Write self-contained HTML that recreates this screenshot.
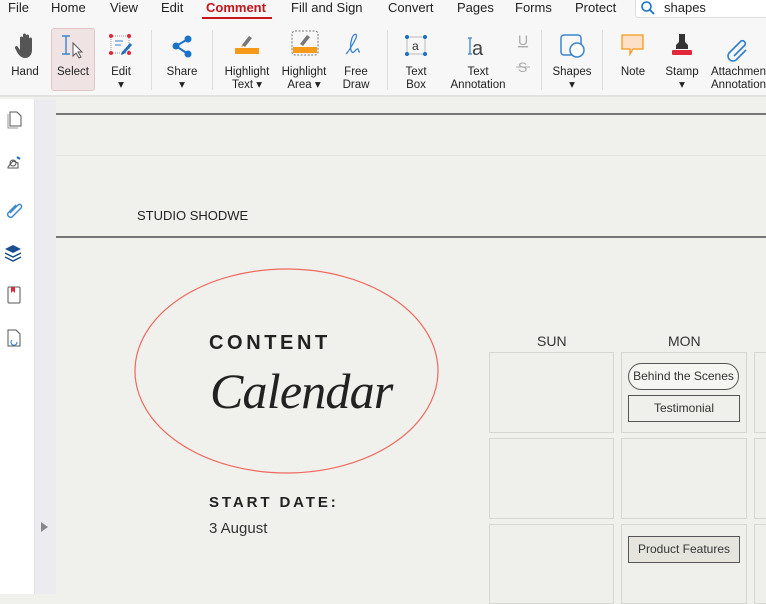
<!DOCTYPE html>
<html><head><meta charset="utf-8"><style>
*{margin:0;padding:0;box-sizing:border-box}
body{width:766px;height:594px;overflow:hidden;background:#f0f0ed;font-family:"Liberation Sans",sans-serif;position:relative}
.a{position:absolute}
.menu{font-size:13px;color:#222;top:0}
.tb{font-size:11.5px;color:#222;text-align:center;line-height:13px}
.cell{position:absolute;border:1.5px solid #d6d6d2;background:#efefeb}
</style></head><body>
<div class="a" style="left:0;top:0;width:766px;height:97px;background:#f7f7f7;border-bottom:2px solid #e2e2e2"></div>
<div class="a menu" style="left:8px">File</div>
<div class="a menu" style="left:51px">Home</div>
<div class="a menu" style="left:110px">View</div>
<div class="a menu" style="left:161px">Edit</div>
<div class="a menu" style="left:206px;color:#c4161c;font-weight:bold">Comment</div>
<div class="a" style="left:202px;top:17px;width:70px;height:2px;background:#c4161c"></div>
<div class="a menu" style="left:291px">Fill and Sign</div>
<div class="a menu" style="left:388px">Convert</div>
<div class="a menu" style="left:457px">Pages</div>
<div class="a menu" style="left:515px">Forms</div>
<div class="a menu" style="left:575px">Protect</div>
<div class="a" style="left:635px;top:-2px;width:140px;height:20px;background:#fff;border:1px solid #ddd;border-radius:3px"></div>
<svg class="a" style="left:640px;top:0" width="16" height="16"><circle cx="6.5" cy="6.5" r="4.5" fill="none" stroke="#1a73c9" stroke-width="1.6"/><path d="M10 10l4 4" stroke="#1a73c9" stroke-width="1.8"/></svg>
<div class="a menu" style="left:664px">shapes</div>
<div class="a" style="left:51px;top:28px;width:44px;height:63px;background:#f0e3e3;border:1px solid #e3c5c5;border-radius:3px"></div>
<div class="a" style="left:151px;top:30px;width:1px;height:60px;background:#ddd"></div>
<div class="a" style="left:212px;top:30px;width:1px;height:60px;background:#ddd"></div>
<div class="a" style="left:387px;top:30px;width:1px;height:60px;background:#ddd"></div>
<div class="a" style="left:541px;top:30px;width:1px;height:60px;background:#ddd"></div>
<div class="a" style="left:602px;top:30px;width:1px;height:60px;background:#ddd"></div>
<svg class="a" style="left:0;top:30px" width="766" height="50">
<path d="M20 20V8a1.5 1.5 0 013 0v7V5a1.5 1.5 0 013 0v10V6a1.5 1.5 0 013 0v10V9a1.5 1.5 0 013 0v11c0 5-3 8-7 8s-6-3-8-6l-2-4a1.5 1.5 0 012.5-1.5z" fill="#555"/>
<path d="M62 6h8M66 6v18M62 24h8" stroke="#3a85d0" stroke-width="1.4" fill="none"/><path d="M73 13v13l3-3 3 5 2-1-3-5h4z" fill="#fff" stroke="#555"/>
<rect x="111" y="6" width="18" height="17" fill="none" stroke="#999" stroke-dasharray="1 1"/><g fill="#e0283a"><circle cx="111" cy="6" r="2"/><circle cx="129" cy="6" r="2"/><circle cx="111" cy="23" r="2"/><circle cx="129" cy="23" r="2"/></g><path d="M115 11h8M115 15h6" stroke="#3a85d0"/><path d="M122 22l8-9 2 2-8 9-3 1z" fill="#1a6fc4"/>
<g fill="#1a73c9"><circle cx="188" cy="9" r="3.5"/><circle cx="176" cy="16" r="3.5"/><circle cx="188" cy="24" r="3.5"/></g><path d="M188 9l-12 7 12 8" stroke="#1a73c9" stroke-width="2" fill="none"/>
<rect x="235" y="18" width="24" height="6" fill="#f79a1a"/><path d="M242 15l7-9 3 2-7 9z" fill="#777"/><path d="M241 17l1-2 2 1z" fill="#f79a1a"/>
<rect x="292" y="1" width="26" height="24" rx="3" fill="none" stroke="#777" stroke-dasharray="2 1.5"/><rect x="293" y="17" width="24" height="6" fill="#f79a1a"/><path d="M300 14l7-9 3 2-7 9z" fill="#777"/>
<path d="M346 24c4-4 8-12 10-16 2-5-2-5-4 0-2 6-2 12 0 14s4-4 6-3c1 1 0 3 2 3" stroke="#3a85d0" stroke-width="1.3" fill="none"/>
<rect x="407" y="7" width="18" height="17" fill="none" stroke="#bbb"/><g fill="#1a6fc4"><circle cx="407" cy="7" r="2"/><circle cx="425" cy="7" r="2"/><circle cx="407" cy="24" r="2"/><circle cx="425" cy="24" r="2"/></g>
<text x="412" y="20" font-size="12" fill="#333" font-family="Liberation Sans">a</text>
<path d="M468 8h4M470 8v16M468 24h4" stroke="#3a85d0" stroke-width="1.3"/><text x="472" y="25" font-size="20" fill="#444" font-family="Liberation Sans">a</text>
<text x="518" y="15" font-size="14" fill="#aaa" font-family="Liberation Sans" text-decoration="underline">U</text><text x="518" y="42" font-size="14" fill="#aaa" font-family="Liberation Sans">S</text><path d="M516 37h14" stroke="#aaa"/>
<rect x="561" y="5" width="20" height="20" rx="3" fill="none" stroke="#3a85d0" stroke-width="1.5"/><circle cx="577" cy="20" r="7" fill="#fff" stroke="#3a85d0" stroke-width="1.5"/>
<path d="M622 5h21v14h-10l-3 5v-5h-8z" fill="#fde0c8" stroke="#f79a1a" stroke-width="1.3"/>
<path d="M679 4h6v8l3 3v4h-12v-4l3-3z" fill="#333"/><rect x="672" y="20" width="20" height="5" rx="1" fill="#e0283a"/>
<path d="M734 26l11-11a3 3 0 00-4-4l-12 12a5 5 0 007 7l10-10" stroke="#2a7fd0" stroke-width="1.6" fill="none"/>
</svg>
<div class="a tb" style="left:6px;top:66px;width:38px">Hand</div>
<div class="a tb" style="left:52px;top:66px;width:42px">Select</div>
<div class="a tb" style="left:100px;top:66px;width:42px">Edit<br>▾</div>
<div class="a tb" style="left:160px;top:66px;width:44px">Share<br>▾</div>
<div class="a tb" style="left:218px;top:66px;width:58px">Highlight<br>Text ▾</div>
<div class="a tb" style="left:276px;top:66px;width:56px">Highlight<br>Area ▾</div>
<div class="a tb" style="left:336px;top:66px;width:40px">Free<br>Draw</div>
<div class="a tb" style="left:396px;top:66px;width:40px">Text<br>Box</div>
<div class="a tb" style="left:446px;top:66px;width:64px">Text<br>Annotation</div>
<div class="a tb" style="left:548px;top:66px;width:48px">Shapes<br>▾</div>
<div class="a tb" style="left:613px;top:66px;width:40px">Note</div>
<div class="a tb" style="left:660px;top:66px;width:44px">Stamp<br>▾</div>
<div class="a tb" style="left:711px;top:66px;width:70px;text-align:left">Attachment<br>Annotation</div>
<div class="a" style="left:0;top:99px;width:35px;height:495px;background:#fff;border-right:1px solid #e2e2e2"></div>
<div class="a" style="left:35px;top:99px;width:21px;height:495px;background:#ececf0"></div>
<div class="a" style="left:41px;top:522px;width:0;height:0;border-left:7px solid #888;border-top:5px solid transparent;border-bottom:5px solid transparent"></div>
<svg class="a" style="left:0;top:99px" width="35" height="260">
<path d="M10 13h7l4 4v10H10z" fill="#fff" stroke="#555"/><path d="M8 15v14h10" fill="none" stroke="#999"/>
<path d="M8 68l5-6 5 2v5H8z" fill="#fff" stroke="#555"/><circle cx="13" cy="64" r="3" fill="none" stroke="#555"/><path d="M17 58l3 2" stroke="#1a6fc4" stroke-width="2"/>
<path d="M10 114l8-8a2 2 0 013 3l-9 9a3 3 0 01-4-4l8-8" stroke="#3a85d0" stroke-width="1.4" fill="none"/>
<path d="M5 150l8-4 8 4-8 4z" fill="#1a4f8f"/><path d="M5 154l8 4 8-4M5 158l8 4 8-4" stroke="#1a4f8f" stroke-width="1.5" fill="none"/>
<rect x="8" y="188" width="12" height="16" rx="1" fill="#fff" stroke="#555"/><path d="M11 188v6l2-2 2 2v-6z" fill="#e0283a"/>
<path d="M8 231h8l4 4v12H8z" fill="#fff" stroke="#555"/><path d="M12 241a3 3 0 105 2" stroke="#2a7fd0" fill="none"/>
</svg>
<div class="a" style="left:56px;top:113px;width:710px;height:2px;background:#777"></div>
<div class="a" style="left:56px;top:155px;width:710px;height:1px;background:#e4e4e0"></div>
<div class="a" style="left:56px;top:236px;width:710px;height:2px;background:#777"></div>
<div class="a" style="left:137px;top:208px;font-size:13px;color:#222">STUDIO SHODWE</div>
<svg class="a" style="left:0;top:0" width="766" height="594"><ellipse cx="286.5" cy="371" rx="151.5" ry="102" fill="none" stroke="#ef6a5e" stroke-width="1.2"/></svg>
<div class="a" style="left:209px;top:332px;font-size:20px;font-weight:bold;letter-spacing:3.6px;color:#222">CONTENT</div>
<div class="a" style="left:210px;top:362px;font-family:'Liberation Serif',serif;font-style:italic;font-size:50px;color:#222;letter-spacing:-0.8px">Calendar</div>
<div class="a" style="left:209px;top:494px;font-size:15px;font-weight:bold;letter-spacing:2.9px;color:#222">START DATE:</div>
<div class="a" style="left:209px;top:520px;font-size:15px;color:#333">3 August</div>
<div class="a" style="left:537px;top:333px;font-size:14px;color:#333">SUN</div>
<div class="a" style="left:668px;top:333px;font-size:14px;color:#333">MON</div>
<div class="cell" style="left:489px;top:352px;width:125px;height:81px"></div>
<div class="cell" style="left:621px;top:352px;width:126px;height:81px"></div>
<div class="cell" style="left:754px;top:352px;width:20px;height:81px"></div>
<div class="cell" style="left:489px;top:438px;width:125px;height:81px"></div>
<div class="cell" style="left:621px;top:438px;width:126px;height:81px"></div>
<div class="cell" style="left:754px;top:438px;width:20px;height:81px"></div>
<div class="cell" style="left:489px;top:524px;width:125px;height:80px"></div>
<div class="cell" style="left:621px;top:524px;width:126px;height:80px"></div>
<div class="cell" style="left:754px;top:524px;width:20px;height:80px"></div>
<div class="a" style="left:628px;top:363px;width:111px;height:27px;border:1.2px solid #555;border-radius:14px;background:#f5f5f1;font-size:12px;color:#333;text-align:center;line-height:25px">Behind the Scenes</div>
<div class="a" style="left:628px;top:395px;width:112px;height:27px;border:1.5px solid #555;font-size:12px;color:#333;text-align:center;line-height:25px">Testimonial</div>
<div class="a" style="left:628px;top:536px;width:112px;height:27px;border:1.5px solid #555;background:#e5e5de;font-size:12px;color:#333;text-align:center;line-height:25px">Product Features</div>
</body></html>
